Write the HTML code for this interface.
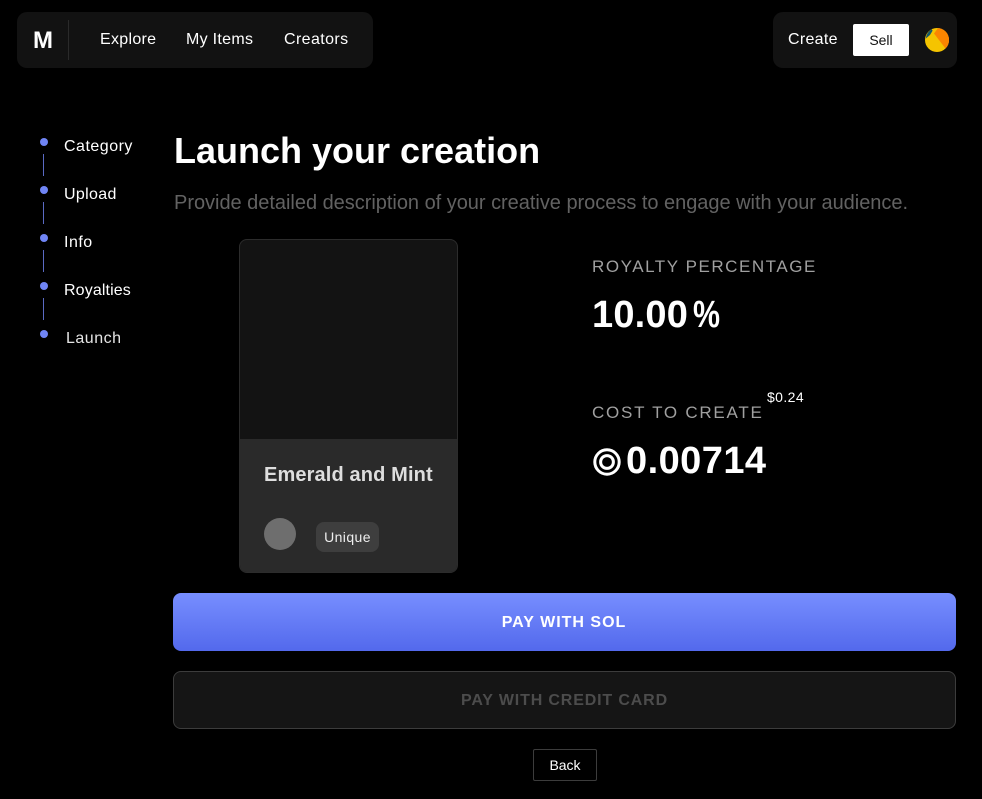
<!DOCTYPE html>
<html lang="en">
<head>
<meta charset="utf-8">
<title>Launch your creation</title>
<style>
html,body{margin:0;padding:0;background:#000;}
body{width:982px;height:799px;position:relative;overflow:hidden;font-family:"Liberation Sans",sans-serif;color:#fff;}
.a{position:absolute;white-space:nowrap;}
.box{position:absolute;background:#121212;border-radius:10px;}
.t16{font-size:16px;line-height:20px;height:20px;}
.dot{position:absolute;left:40px;width:8px;height:8px;border-radius:50%;background:#7085f5;}
.line{position:absolute;left:43px;width:1px;height:22px;background:#7085f5;opacity:.8;}
.label{font-size:17px;line-height:20px;color:#a0a0a0;}
.big{font-size:38px;line-height:44px;font-weight:700;}
</style>
</head>
<body>
<div class="box" style="left:17px;top:12px;width:356px;height:56px"></div>
<div class="a" style="left:33px;top:27px;font-size:24px;line-height:28px;font-weight:700">M</div>
<div class="a" style="left:68px;top:20px;width:1px;height:40px;background:#2a2a2a"></div>
<div class="a t16" style="left:100px;top:30px;letter-spacing:.3px">Explore</div>
<div class="a t16" style="left:186px;top:30px;letter-spacing:.3px">My Items</div>
<div class="a t16" style="left:284px;top:30px;letter-spacing:.4px">Creators</div>

<div class="box" style="left:773px;top:12px;width:184px;height:56px"></div>
<div class="a t16" style="left:788px;top:30px;letter-spacing:.3px">Create</div>
<div class="a" style="left:853px;top:24px;width:56px;height:32px;background:#fff;border-radius:2px;color:#111;font-size:14px;line-height:32px;text-align:center">Sell</div>
<svg class="a" style="left:925px;top:28px" width="24" height="24" viewBox="0 0 24 24">
<circle cx="12" cy="12" r="12" fill="#f5c400"/>
<path d="M9 5.5L20.5 20.5A12 12 0 0 0 13 0Z" fill="#fb8500"/>
<path d="M.8 10.5A12 12 0 0 1 6.7 1.2L7.6 2.6L5 7Z" fill="#14586a"/>
</svg>

<div class="dot" style="top:138px"></div>
<div class="line" style="top:154px"></div>
<div class="dot" style="top:186px"></div>
<div class="line" style="top:202px"></div>
<div class="dot" style="top:234px"></div>
<div class="line" style="top:250px"></div>
<div class="dot" style="top:282px"></div>
<div class="line" style="top:298px"></div>
<div class="dot" style="top:330px"></div>
<div class="a t16" style="left:64px;top:137px;letter-spacing:.5px">Category</div>
<div class="a t16" style="left:64px;top:185px;letter-spacing:.35px">Upload</div>
<div class="a t16" style="left:64px;top:233px;letter-spacing:.5px">Info</div>
<div class="a t16" style="left:64px;top:281px;letter-spacing:.12px">Royalties</div>
<div class="a t16" style="left:66px;top:329px;letter-spacing:.5px;color:#e4e4e4">Launch</div>

<div class="a" style="left:174px;top:130px;font-size:36px;line-height:42px;font-weight:700">Launch your creation</div>
<div class="a" style="left:174px;top:191px;font-size:20px;line-height:24px;letter-spacing:-.024px;color:#626262">Provide detailed description of your creative process to engage with your audience.</div>

<div class="a" style="left:239px;top:239px;width:217px;height:332px;border:1px solid #2c2c2c;border-radius:8px;background:#131313;overflow:hidden">
<div style="position:absolute;left:0;top:199px;width:217px;height:133px;background:#2a2a2a"></div>
</div>
<div class="a" style="left:264px;top:463px;font-size:20px;line-height:24px;font-weight:700;letter-spacing:.13px;color:#dedede">Emerald and Mint</div>
<div class="a" style="left:264px;top:518px;width:32px;height:32px;border-radius:50%;background:#6e6e6e"></div>
<div class="a" style="left:316px;top:522px;width:63px;height:30px;border-radius:8px;background:#3e3e3e;font-size:14px;line-height:30px;letter-spacing:.4px;text-align:center;color:#eee">Unique</div>

<div class="a label" style="left:592px;top:257px;letter-spacing:1.54px">ROYALTY PERCENTAGE</div>
<div class="a big" style="left:592px;top:293px;letter-spacing:.2px">10.00<span style="display:inline-block;margin-left:5px;letter-spacing:0;transform:scaleX(.8);transform-origin:0 50%">%</span></div>
<div class="a label" style="left:592px;top:403px;letter-spacing:1.75px">COST TO CREATE</div>
<div class="a" style="left:767px;top:388px;font-size:14px;line-height:18px;letter-spacing:.4px">$0.24</div>
<svg class="a" style="left:593px;top:448px" width="28" height="28" viewBox="0 0 28 28" fill="none" stroke="#fff">
<circle cx="14" cy="14" r="12.2" stroke-width="3"/>
<circle cx="14" cy="14" r="6.4" stroke-width="3"/>
</svg>
<div class="a big" style="left:626px;top:439px;letter-spacing:.45px">0.00714</div>

<div class="a" style="left:173px;top:593px;width:783px;height:58px;border-radius:8px;background:linear-gradient(180deg,#778eff 0%,#5369ec 100%);font-size:16px;line-height:60px;font-weight:700;letter-spacing:1px;text-align:center;text-indent:-1px">PAY WITH SOL</div>
<div class="a" style="left:173px;top:671px;width:781px;height:56px;border:1px solid #3c3c3c;border-radius:8px;background:#151515;font-size:16px;line-height:58px;font-weight:700;letter-spacing:.85px;text-align:center;color:#4c4c4c">PAY WITH CREDIT CARD</div>
<div class="a" style="left:533px;top:749px;width:62px;height:30px;border:1px solid #3c3c3c;border-radius:2px;background:#000;font-size:14px;line-height:31px;text-align:center">Back</div>
</body>
</html>
